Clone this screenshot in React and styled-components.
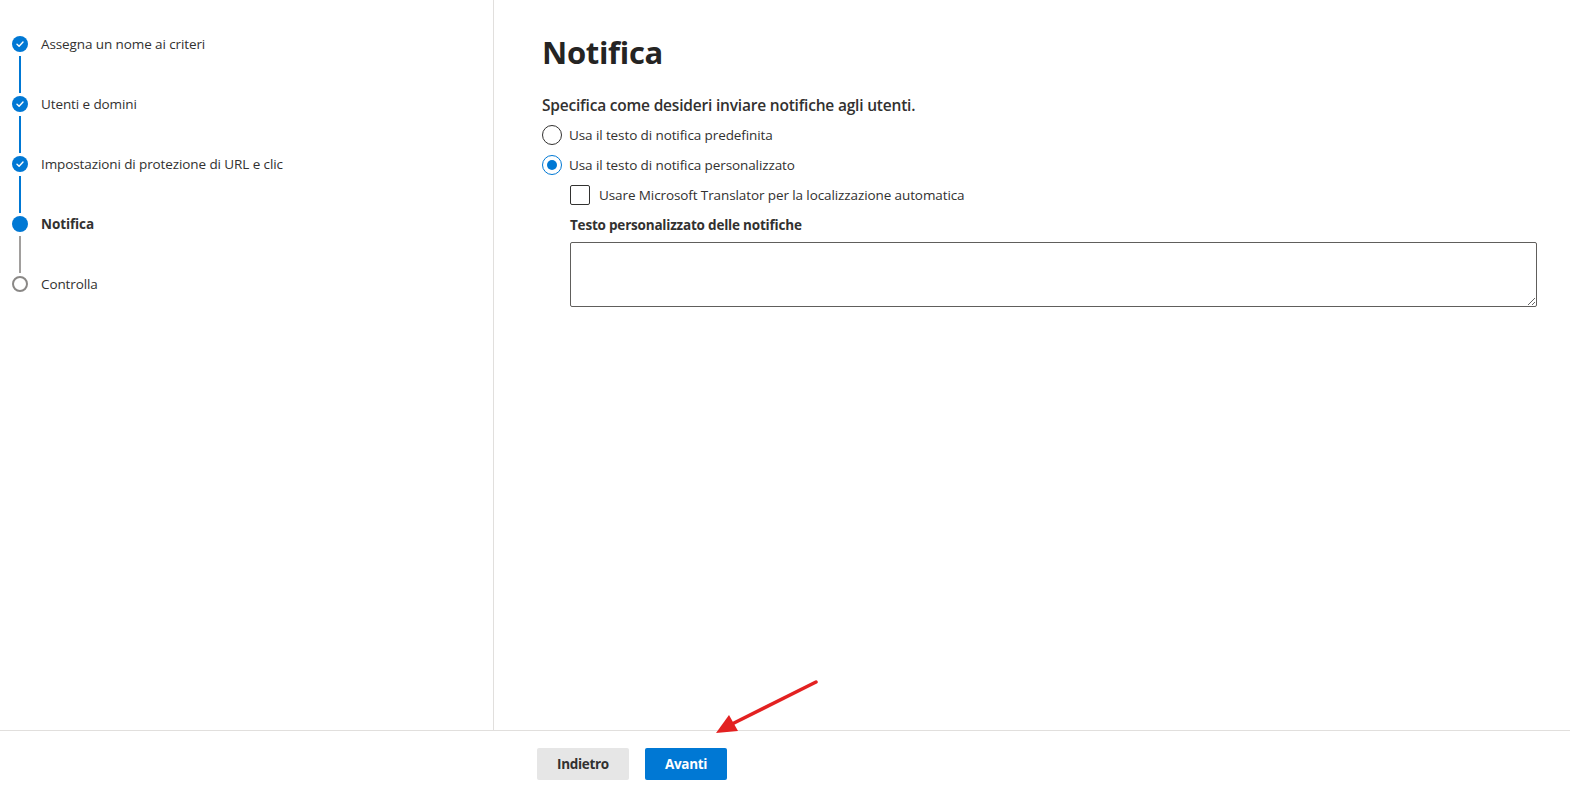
import React from "react"
import styled, { createGlobalStyle } from "styled-components"

const Global = createGlobalStyle`
html, body {
    margin: 0;
    padding: 0;
    background: #fff;
}
body {
    font-family: "Open Sans", "Noto Sans", sans-serif;
    color: #323130;
}
`

const Page = styled.div`
position: relative;
width: 1570px;
height: 789px;
display: flex;
flex-direction: column;
overflow: hidden;
`

const Body = styled.div`
height: 730px;
flex: none;
display: flex;
`

const Nav = styled.nav`
width: 494px;
border-right: 1px solid #e1dfdd;
padding: 36px 0 0 12px;
box-sizing: border-box;
`

const Step = styled.div`
display: flex;
height: ${p => (p.last ? "16px" : "60px")};
`

const Marker = styled.div`
width: 16px;
display: flex;
flex-direction: column;
align-items: center;
`

const Dot = styled.div`
width: 16px;
height: 16px;
flex: none;
box-sizing: border-box;
border-radius: 50%;
display: flex;
align-items: center;
justify-content: center;
background: ${p => (p.state === "todo" ? "#fff" : "#0078d4")};
border: ${p => (p.state === "todo" ? "2px solid #8a8886" : "none")};
`

const Line = styled.div`
flex: 1;
width: 2px;
margin: 4px 0 3px;
background: ${p => (p.done ? "#0078d4" : "#a19f9d")};
`

const StepLabel = styled.div`
margin-left: 13px;
font-size: 13.5px;
line-height: 16px;
letter-spacing: -0.1px;
font-weight: ${p => (p.current ? 700 : 400)};
color: #323130;
`

const Main = styled.main`
flex: 1;
padding: 30px 33px 0 48px;
`

const Title = styled.h1`
margin: 0;
font-size: 31px;
line-height: 44px;
font-weight: 700;
letter-spacing: -0.3px;
color: #252423;
`

const Lead = styled.div`
margin-top: 20px;
font-size: 15.5px;
line-height: 22px;
font-weight: 600;
letter-spacing: -0.2px;
`

const Options = styled.div`
margin-top: 9px;
display: flex;
flex-direction: column;
gap: 10px;
`

const Option = styled.label`
display: flex;
align-items: center;
gap: 7px;
font-size: 13.5px;
letter-spacing: -0.1px;
line-height: 20px;
padding-left: ${p => (p.indent ? "28px" : "0")};
`

const Radio = styled.span`
width: 20px;
height: 20px;
box-sizing: border-box;
border-radius: 50%;
border: 1px solid ${p => (p.checked ? "#0078d4" : "#323130")};
display: flex;
align-items: center;
justify-content: center;
&::after {
    content: "";
    width: 10px;
    height: 10px;
    border-radius: 50%;
    background: ${p => (p.checked ? "#0078d4" : "transparent")};
}
`

const Box = styled.span`
width: 20px;
height: 20px;
box-sizing: border-box;
border: 1px solid #323130;
border-radius: 2px;
margin-right: 2px;
`

const Field = styled.div`
margin-left: 28px;
margin-top: 10px;
`

const FieldLabel = styled.div`
font-size: 13.5px;
font-weight: 700;
letter-spacing: -0.2px;
line-height: 20px;
`

const Area = styled.textarea`
display: block;
margin-top: 7px;
width: 100%;
height: 65px;
box-sizing: border-box;
border: 1px solid #605e5c;
border-radius: 2px;
font: inherit;
`

const Footer = styled.footer`
flex: 1;
border-top: 1px solid #e1dfdd;
display: flex;
align-items: flex-start;
gap: 16px;
padding: 17px 0 0 537px;
`

const Button = styled.button`
height: 32px;
padding: 0 20px;
min-width: 80px;
border: none;
border-radius: 2px;
font-family: inherit;
font-size: 13.5px;
font-weight: 700;
letter-spacing: -0.3px;
background: ${p => (p.primary ? "#0078d4" : "#e6e6e6")};
color: ${p => (p.primary ? "#fff" : "#323130")};
`

const Arrow = styled.svg`
position: absolute;
left: 700px;
top: 670px;
pointer-events: none;
`

const steps = [
    { label: "Assegna un nome ai criteri", state: "done" },
    { label: "Utenti e domini", state: "done" },
    { label: "Impostazioni di protezione di URL e clic", state: "done" },
    { label: "Notifica", state: "current" },
    { label: "Controlla", state: "todo" },
]

const Check = () => (
    <svg width="10" height="10" viewBox="0 0 10 10">
        <path d="M2 5.2 L4.1 7.2 L8 3" fill="none" stroke="#fff" strokeWidth="1.4" strokeLinecap="round" strokeLinejoin="round" />
    </svg>
)

const App = () => (
    <Page>
        <Global />
        <Body>
            <Nav>
                {steps.map((s, i) => {
                    const last = i === steps.length - 1
                    return (
                        <Step key={s.label} last={last}>
                            <Marker>
                                <Dot state={s.state}>{s.state === "done" && <Check />}</Dot>
                                {!last && <Line done={s.state === "done"} />}
                            </Marker>
                            <StepLabel current={s.state === "current"}>{s.label}</StepLabel>
                        </Step>
                    )
                })}
            </Nav>
            <Main>
                <Title>Notifica</Title>
                <Lead>Specifica come desideri inviare notifiche agli utenti.</Lead>
                <Options>
                    <Option><Radio />Usa il testo di notifica predefinita</Option>
                    <Option><Radio checked />Usa il testo di notifica personalizzato</Option>
                    <Option indent><Box />Usare Microsoft Translator per la localizzazione automatica</Option>
                </Options>
                <Field>
                    <FieldLabel>Testo personalizzato delle notifiche</FieldLabel>
                    <Area />
                </Field>
            </Main>
        </Body>
        <Footer>
            <Button>Indietro</Button>
            <Button primary>Avanti</Button>
        </Footer>
        <Arrow width="130" height="70" viewBox="0 0 130 70">
            <line x1="116" y1="12" x2="32" y2="54" stroke="#e32121" strokeWidth="3.5" strokeLinecap="round" />
            <polygon points="16,63 29,45 38,61" fill="#e32121" />
        </Arrow>
    </Page>
)

export default App
